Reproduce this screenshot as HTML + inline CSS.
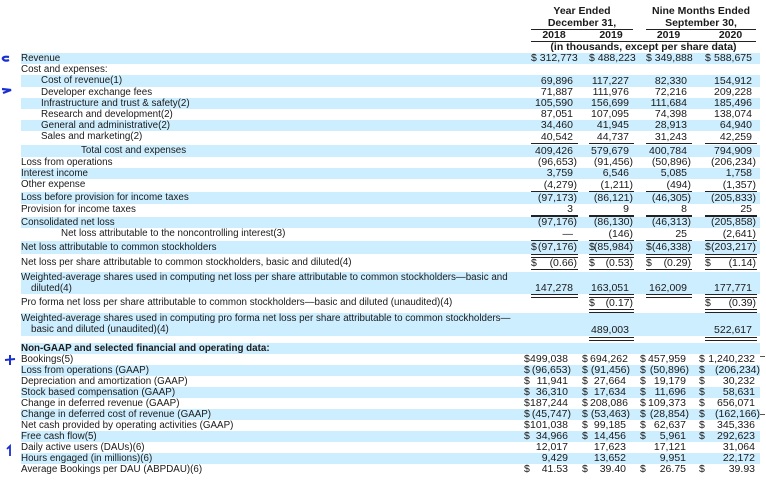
<!DOCTYPE html>
<html><head><meta charset="utf-8"><style>
body{margin:0;width:766px;height:481px;background:#fff;position:relative;overflow:hidden;font-family:"Liberation Sans",Arial,sans-serif;font-size:10.5px;color:#1a1a1a}
.r{position:absolute;left:0;width:766px}
.s::before{content:'';position:absolute;left:21px;right:6px;top:0;bottom:0;background:#cdeeff}
.l{position:absolute;white-space:nowrap;left:21px;font-size:9.8px}
.c{position:absolute;top:0;text-align:right;padding-right:4px;box-sizing:border-box;white-space:nowrap}
.n{padding-right:0}
.c1{left:531px;width:46px}.c2{left:589px;width:44px}.c3{left:646px;width:45px}.c4{left:705px;width:51px}
.d{position:absolute;top:0}
.d1{left:531px}.d2{left:589px}.d3{left:646px}.d4{left:705px}
.b1{left:524px;width:44px}.b2{left:590px;width:36px}.b3{left:648px;width:38px}.b4{left:707px;width:48px}
.bd1{left:524px}.bd2{left:582px}.bd3{left:640px}.bd4{left:699px}
.u{position:absolute;height:0;border-top:1.3px solid #222}
.w{position:absolute;height:2px;border-top:1.3px solid #222;border-bottom:1.3px solid #222}
.x1{left:531px;width:47px}.x2{left:589px;width:45px}.x3{left:646px;width:46px}.x4{left:705px;width:52px}
.h{position:absolute;font-weight:bold;text-align:center;white-space:nowrap}
</style></head><body>

<div class="h" style="left:531px;width:102px;top:5px">Year Ended</div>
<div class="h" style="left:531px;width:102px;top:17px">December 31,</div>
<div class="h" style="left:646px;width:110px;top:5px">Nine Months Ended</div>
<div class="h" style="left:646px;width:110px;top:17px">September 30,</div>
<div class="u" style="left:531px;width:102px;top:29px"></div>
<div class="u" style="left:646px;width:110px;top:29px"></div>
<div class="h" style="left:531px;width:46px;top:29px">2018</div>
<div class="h" style="left:589px;width:44px;top:29px">2019</div>
<div class="h" style="left:646px;width:45px;top:29px">2019</div>
<div class="h" style="left:705px;width:51px;top:29px">2020</div>
<div class="u" style="left:531px;width:225px;top:41px"></div>
<div class="h" style="left:531px;width:225px;top:41px">(in thousands, except per share data)</div>

<div class="r s" style="top:53px;height:11px;line-height:11px"><span class="l">Revenue</span><span class="c c1">$ 312,773</span><span class="c c2">$ 488,223</span><span class="c c3">$ 349,888</span><span class="d d4">$</span><span class="c c4">588,675</span></div>
<div class="r" style="top:64px;height:11px;line-height:11px"><span class="l">Cost and expenses:</span></div>
<div class="r s" style="top:75px;height:12px;line-height:12px"><span class="l" style="left:41px">Cost of revenue(1)</span><span class="c c1">69,896</span><span class="c c2">117,227</span><span class="c c3">82,330</span><span class="c c4">154,912</span></div>
<div class="r" style="top:87px;height:11px;line-height:11px"><span class="l" style="left:41px">Developer exchange fees</span><span class="c c1">71,887</span><span class="c c2">111,976</span><span class="c c3">72,216</span><span class="c c4">209,228</span></div>
<div class="r s" style="top:98px;height:11px;line-height:11px"><span class="l" style="left:41px">Infrastructure and trust &amp; safety(2)</span><span class="c c1">105,590</span><span class="c c2">156,699</span><span class="c c3">111,684</span><span class="c c4">185,496</span></div>
<div class="r" style="top:109px;height:11px;line-height:11px"><span class="l" style="left:41px">Research and development(2)</span><span class="c c1">87,051</span><span class="c c2">107,095</span><span class="c c3">74,398</span><span class="c c4">138,074</span></div>
<div class="r s" style="top:120px;height:11px;line-height:11px"><span class="l" style="left:41px">General and administrative(2)</span><span class="c c1">34,460</span><span class="c c2">41,945</span><span class="c c3">28,913</span><span class="c c4">64,940</span></div>
<div class="r" style="top:131px;height:12px;line-height:12px"><span class="l" style="left:41px">Sales and marketing(2)</span><span class="c c1">40,542</span><span class="c c2">44,737</span><span class="c c3">31,243</span><span class="c c4">42,259</span></div>
<div class="u x1" style="top:143px"></div><div class="u x2" style="top:143px"></div><div class="u x3" style="top:143px"></div><div class="u x4" style="top:143px"></div>
<div class="r s" style="top:145px;height:12px;line-height:12px"><span class="l" style="left:81px">Total cost and expenses</span><span class="c c1">409,426</span><span class="c c2">579,679</span><span class="c c3">400,784</span><span class="c c4">794,909</span></div>
<div class="r" style="top:157px;height:11px;line-height:11px"><span class="l">Loss from operations</span><span class="c c1 n">(96,653)</span><span class="c c2 n">(91,456)</span><span class="c c3 n">(50,896)</span><span class="c c4 n">(206,234)</span></div>
<div class="r s" style="top:168px;height:11px;line-height:11px"><span class="l">Interest income</span><span class="c c1">3,759</span><span class="c c2">6,546</span><span class="c c3">5,085</span><span class="c c4">1,758</span></div>
<div class="r" style="top:179px;height:12px;line-height:12px"><span class="l">Other expense</span><span class="c c1 n">(4,279)</span><span class="c c2 n">(1,211)</span><span class="c c3 n">(494)</span><span class="c c4 n">(1,357)</span></div>
<div class="u x1" style="top:191px"></div><div class="u x2" style="top:191px"></div><div class="u x3" style="top:191px"></div><div class="u x4" style="top:191px"></div>
<div class="r s" style="top:192px;height:12px;line-height:12px"><span class="l">Loss before provision for income taxes</span><span class="c c1 n">(97,173)</span><span class="c c2 n">(86,121)</span><span class="c c3 n">(46,305)</span><span class="c c4 n">(205,833)</span></div>
<div class="r" style="top:204px;height:11px;line-height:11px"><span class="l">Provision for income taxes</span><span class="c c1">3</span><span class="c c2">9</span><span class="c c3">8</span><span class="c c4">25</span></div>
<div class="u x1" style="top:215px;border-top-width:2px"></div><div class="u x2" style="top:215px;border-top-width:2px"></div><div class="u x3" style="top:215px;border-top-width:2px"></div><div class="u x4" style="top:215px;border-top-width:2px"></div>
<div class="r s" style="top:217px;height:11px;line-height:11px"><span class="l">Consolidated net loss</span><span class="c c1 n">(97,176)</span><span class="c c2 n">(86,130)</span><span class="c c3 n">(46,313)</span><span class="c c4 n">(205,858)</span></div>
<div class="r" style="top:228px;height:12px;line-height:12px"><span class="l" style="left:61px">Net loss attributable to the noncontrolling interest(3)</span><span class="c c1">—</span><span class="c c2 n">(146)</span><span class="c c3">25</span><span class="c c4 n">(2,641)</span></div>
<div class="u x1" style="top:240px"></div><div class="u x2" style="top:240px"></div><div class="u x3" style="top:240px"></div><div class="u x4" style="top:240px"></div>
<div class="r s" style="top:241px;height:13px;line-height:13px"><span class="l">Net loss attributable to common stockholders</span><span class="d d1">$</span><span class="c c1 n">(97,176)</span><span class="d d2">$</span><span class="c c2 n">(85,984)</span><span class="d d3">$</span><span class="c c3 n">(46,338)</span><span class="d d4">$</span><span class="c c4 n">(203,217)</span></div>
<div class="w x1" style="top:254px"></div><div class="w x2" style="top:254px"></div><div class="w x3" style="top:254px"></div><div class="w x4" style="top:254px"></div>
<div class="r" style="top:257px;height:12px;line-height:12px"><span class="l">Net loss per share attributable to common stockholders, basic and diluted(4)</span><span class="d d1">$</span><span class="c c1 n">(0.66)</span><span class="d d2">$</span><span class="c c2 n">(0.53)</span><span class="d d3">$</span><span class="c c3 n">(0.29)</span><span class="d d4">$</span><span class="c c4 n">(1.14)</span></div>
<div class="w x1" style="top:269px"></div><div class="w x2" style="top:269px"></div><div class="w x3" style="top:269px"></div><div class="w x4" style="top:269px"></div>
<div class="r s" style="top:272px;height:22px"><span class="l" style="top:0;line-height:11px">Weighted-average shares used in computing net loss per share attributable to common stockholders—basic and<br><span style="padding-left:10px">diluted(4)</span></span><span class="c c1" style="top:11px;line-height:11px">147,278</span><span class="c c2" style="top:11px;line-height:11px">163,051</span><span class="c c3" style="top:11px;line-height:11px">162,009</span><span class="c c4" style="top:11px;line-height:11px">177,771</span></div>
<div class="w x1" style="top:294px"></div><div class="w x2" style="top:294px"></div><div class="w x3" style="top:294px"></div><div class="w x4" style="top:294px"></div>
<div class="r" style="top:297px;height:12px;line-height:12px"><span class="l">Pro forma net loss per share attributable to common stockholders—basic and diluted (unaudited)(4)</span><span class="d d2">$</span><span class="c c2 n">(0.17)</span><span class="d d4">$</span><span class="c c4 n">(0.39)</span></div>
<div class="w x2" style="top:309px"></div><div class="w x4" style="top:309px"></div>
<div class="r s" style="top:313px;height:23px"><span class="l" style="line-height:11px">Weighted-average shares used in computing pro forma net loss per share attributable to common stockholders—<br><span style="padding-left:10px">basic and diluted (unaudited)(4)</span></span><span class="c c2" style="top:12px;line-height:11px">489,003</span><span class="c c4" style="top:12px;line-height:11px">522,617</span></div>
<div class="w x2" style="top:337px"></div><div class="w x4" style="top:337px"></div>

<div class="r s" style="top:343px;height:11px;line-height:11px"><span class="l" style="font-weight:bold">Non-GAAP and selected financial and operating data:</span></div>
<div class="r" style="top:354px;height:11px;line-height:11px"><span class="l">Bookings(5)</span><span class="d bd1">$</span><span class="c b1 n">499,038</span><span class="d bd2">$</span><span class="c b2 n">694,262</span><span class="d bd3">$</span><span class="c b3 n">457,959</span><span class="d bd4">$</span><span class="c b4 n">1,240,232</span></div>
<div class="r s" style="top:365px;height:11px;line-height:11px"><span class="l">Loss from operations (GAAP)</span><span class="d bd1">$</span><span class="c b1 n" style="width:47px">(96,653)</span><span class="d bd2">$</span><span class="c b2 n" style="width:40px">(91,456)</span><span class="d bd3">$</span><span class="c b3 n" style="width:41px">(50,896)</span><span class="d bd4">$</span><span class="c b4 n" style="width:53px">(206,234)</span></div>
<div class="r" style="top:376px;height:11px;line-height:11px"><span class="l">Depreciation and amortization (GAAP)</span><span class="d bd1">$</span><span class="c b1 n">11,941</span><span class="d bd2">$</span><span class="c b2 n">27,664</span><span class="d bd3">$</span><span class="c b3 n">19,179</span><span class="d bd4">$</span><span class="c b4 n">30,232</span></div>
<div class="r s" style="top:387px;height:11px;line-height:11px"><span class="l">Stock based compensation (GAAP)</span><span class="d bd1">$</span><span class="c b1 n">36,310</span><span class="d bd2">$</span><span class="c b2 n">17,634</span><span class="d bd3">$</span><span class="c b3 n">11,696</span><span class="d bd4">$</span><span class="c b4 n">58,631</span></div>
<div class="r" style="top:398px;height:11px;line-height:11px"><span class="l">Change in deferred revenue (GAAP)</span><span class="d bd1">$</span><span class="c b1 n">187,244</span><span class="d bd2">$</span><span class="c b2 n">208,086</span><span class="d bd3">$</span><span class="c b3 n">109,373</span><span class="d bd4">$</span><span class="c b4 n">656,071</span></div>
<div class="r s" style="top:409px;height:11px;line-height:11px"><span class="l">Change in deferred cost of revenue (GAAP)</span><span class="d bd1">$</span><span class="c b1 n" style="width:47px">(45,747)</span><span class="d bd2">$</span><span class="c b2 n" style="width:40px">(53,463)</span><span class="d bd3">$</span><span class="c b3 n" style="width:41px">(28,854)</span><span class="d bd4">$</span><span class="c b4 n" style="width:53px">(162,166)</span></div>
<div class="r" style="top:420px;height:11px;line-height:11px"><span class="l">Net cash provided by operating activities (GAAP)</span><span class="d bd1">$</span><span class="c b1 n">101,038</span><span class="d bd2">$</span><span class="c b2 n">99,185</span><span class="d bd3">$</span><span class="c b3 n">62,637</span><span class="d bd4">$</span><span class="c b4 n">345,336</span></div>
<div class="r s" style="top:431px;height:11px;line-height:11px"><span class="l">Free cash flow(5)</span><span class="d bd1">$</span><span class="c b1 n">34,966</span><span class="d bd2">$</span><span class="c b2 n">14,456</span><span class="d bd3">$</span><span class="c b3 n">5,961</span><span class="d bd4">$</span><span class="c b4 n">292,623</span></div>
<div class="r" style="top:442px;height:11px;line-height:11px"><span class="l">Daily active users (DAUs)(6)</span><span class="c b1 n">12,017</span><span class="c b2 n">17,623</span><span class="c b3 n">17,121</span><span class="c b4 n">31,064</span></div>
<div class="r s" style="top:453px;height:11px;line-height:11px"><span class="l">Hours engaged (in millions)(6)</span><span class="c b1 n">9,429</span><span class="c b2 n">13,652</span><span class="c b3 n">9,951</span><span class="c b4 n">22,172</span></div>
<div class="r" style="top:464px;height:11px;line-height:11px"><span class="l">Average Bookings per DAU (ABPDAU)(6)</span><span class="d bd1">$</span><span class="c b1 n">41.53</span><span class="d bd2">$</span><span class="c b2 n">39.40</span><span class="d bd3">$</span><span class="c b3 n">26.75</span><span class="d bd4">$</span><span class="c b4 n">39.93</span></div>
<div class="u" style="left:760px;width:5px;top:356px;border-color:#555"></div>
<div class="u" style="left:760px;width:5px;top:414px;border-color:#555"></div>

<svg style="position:absolute;left:0;top:0" width="20" height="481">
<path d="M9 57 C4 56,2 58,3 59 C4 61,7 61,9 60" stroke="#1a2fd0" stroke-width="2.2" fill="none"/>
<path d="M2 89 L11 90 L3 93" stroke="#1a2fd0" stroke-width="2.2" fill="none"/>
<path d="M5 360 L15 359 M10 355 L10 365" stroke="#1a2fd0" stroke-width="2" fill="none"/>
<path d="M7 449 L10 446 L10 456" stroke="#1a2fd0" stroke-width="1.8" fill="none"/>
</svg>
</body></html>
